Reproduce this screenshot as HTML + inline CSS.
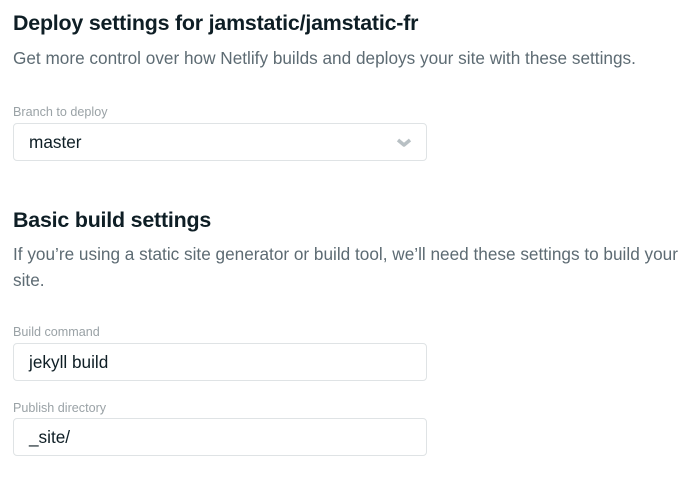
<!DOCTYPE html>
<html><head><style>
body{margin:0;background:#fff;font-family:"Liberation Sans",sans-serif;width:697px;height:478px;overflow:hidden;position:relative}
.a{position:absolute;left:13px;white-space:nowrap}
h{font-weight:bold;font-size:21.4px;color:#0e1e25;letter-spacing:-0.2px}
.s{font-size:17.2px;color:#5d6b73}
.l{font-size:12.6px;color:#9aa2a6}
.box{position:absolute;left:13px;width:412px;height:36px;border:1px solid #dfe3e5;border-radius:4px;box-sizing:content-box;font-size:17.2px;color:#0e1e25;line-height:37px;text-indent:15px}
</style></head><body>
<div class="a" style="top:11px"><h>Deploy settings for jamstatic/jamstatic-fr</h></div>
<div class="a s" style="top:48px">Get more control over how Netlify builds and deploys your site with these settings.</div>
<div class="a l" style="top:105px">Branch to deploy</div>
<div class="box" style="top:123px">master
<svg style="position:absolute;right:14px;top:14px" width="16" height="10" viewBox="0 0 16 10"><path d="M2 2l6 5 6-5" stroke="#b8c0c4" stroke-width="3.5" fill="none" stroke-linejoin="round"/></svg></div>
<div class="a" style="top:208px"><h>Basic build settings</h></div>
<div class="a s" style="top:241px;line-height:26px">If you’re using a static site generator or build tool, we’ll need these settings to build your<br>site.</div>
<div class="a l" style="top:325px">Build command</div>
<div class="box" style="top:343px">jekyll build</div>
<div class="a l" style="top:401px">Publish directory</div>
<div class="box" style="top:418px">_site/</div>
</body></html>
